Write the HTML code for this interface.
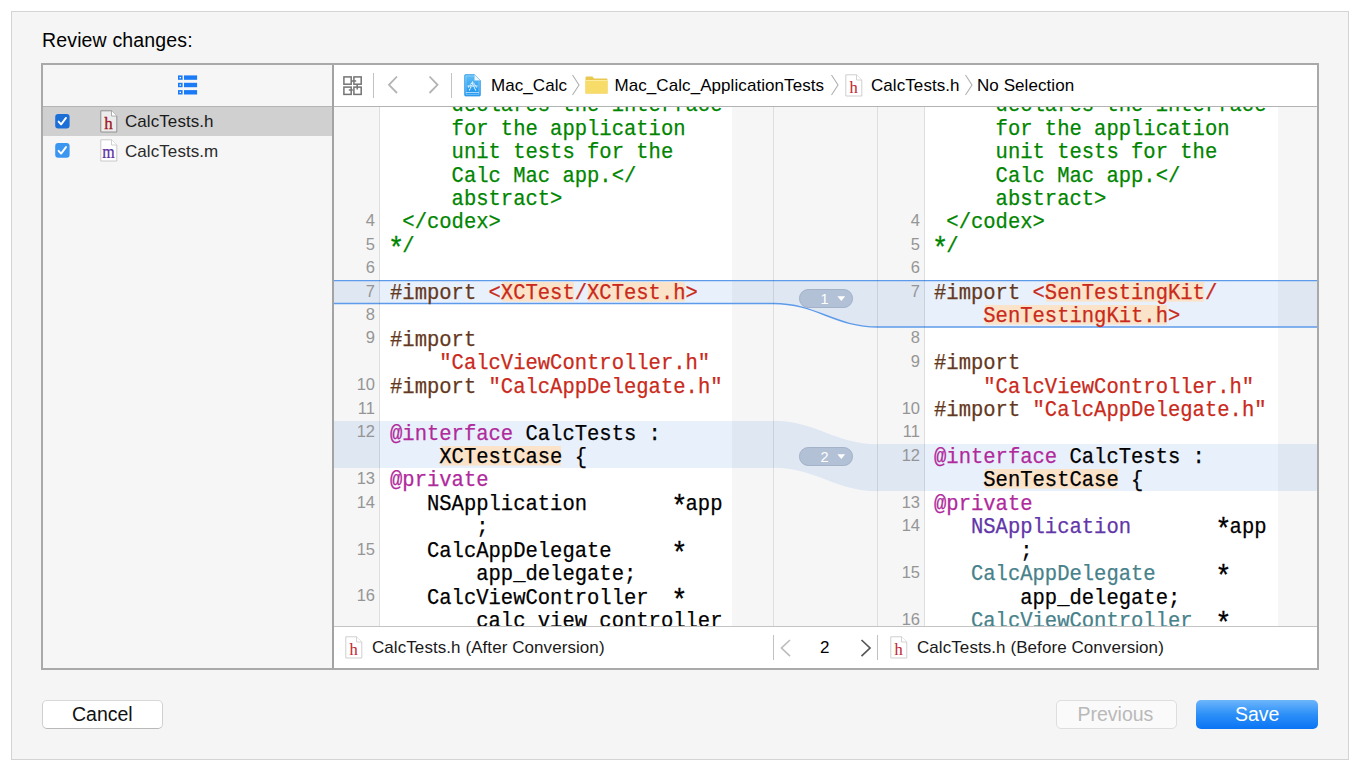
<!DOCTYPE html>
<html><head><meta charset="utf-8">
<style>
*{margin:0;padding:0;box-sizing:border-box}
html,body{width:1360px;height:771px;overflow:hidden;background:#fff;font-family:"Liberation Sans",sans-serif;color:#000}
.a{position:absolute}
.t{position:absolute;white-space:pre;line-height:1}
#frame{left:11px;top:11px;width:1338px;height:749px;border:1px solid #d4d4d4;background:#f5f5f5}
#box{left:41px;top:63px;width:1278px;height:607px;border:2px solid #a9a9a9;background:#f6f6f6}
.code{position:absolute;font-family:"Liberation Mono",monospace;font-size:22.4px;line-height:23.46px;white-space:pre;color:#000;-webkit-text-stroke:0.25px currentColor;transform:scaleX(0.91651);transform-origin:0 0}
.ln{position:absolute;font-family:"Liberation Sans",sans-serif;font-size:16.5px;line-height:23.46px;color:#959595;text-align:right;white-space:pre}
.ast{display:inline-block;transform:translate(0,4.6px) scale(1.32)}
.cm{color:#008500}.pp{color:#643820}.st{color:#c92a1b}.kw{color:#b02a9c}.sc{color:#6236a8}.pc{color:#47818a}
.hl{background:linear-gradient(90deg,transparent 1.2px,#fae3c9 1.2px,#fae3c9 calc(100% - 1.2px),transparent calc(100% - 1.2px)) 0 1.8px/100% 19.6px no-repeat}
.ui{font-size:17px;letter-spacing:0.07px}
</style></head><body>
<div id="frame" class="a"></div>
<div class="t" style="left:42px;top:30.5px;font-size:19.5px;letter-spacing:0.15px">Review changes:</div>

<div id="box" class="a"></div>

<!-- sidebar -->
<div class="a" style="left:43px;top:106px;width:289px;height:1px;background:#b4b4b4"></div>
<div class="a" style="left:43px;top:107px;width:289px;height:29px;background:#d0d0d0"></div>
<div class="a" style="left:332px;top:65px;width:2px;height:603px;background:#a3a3a3"></div>
<svg class="a" style="left:178px;top:75.4px" width="20" height="20" viewBox="0 0 20 20">
  <g fill="#1b7af6">
    <rect x="0" y="0.4" width="4.6" height="4.4"/><rect x="6" y="0.4" width="13.1" height="4.4"/>
    <rect x="0" y="7.8" width="4.6" height="4.4"/><rect x="6" y="7.8" width="13.1" height="4.4"/>
    <rect x="0" y="15.1" width="4.6" height="4.4"/><rect x="6" y="15.1" width="13.1" height="4.4"/>
  </g>
  <g fill="#fff"><rect x="1.6" y="2" width="1.4" height="1.3"/><rect x="1.6" y="9.4" width="1.4" height="1.3"/><rect x="1.6" y="16.7" width="1.4" height="1.3"/></g>
</svg>
<!-- checkboxes -->
<svg class="a" style="left:54.5px;top:114px" width="15" height="15" viewBox="0 0 15 15">
  <rect x="0.2" y="0" width="14.4" height="14.4" rx="3" fill="#1c6fd6"/>
  <path d="M3.6,7.6 L6.1,10.4 L11,3.9" stroke="#fff" stroke-width="1.9" fill="none" stroke-linecap="round" stroke-linejoin="round"/>
</svg>
<svg class="a" style="left:54.5px;top:143px" width="15" height="15" viewBox="0 0 15 15">
  <rect x="0.2" y="0" width="14.4" height="14.8" rx="3" fill="#3b96f2"/>
  <path d="M3.6,7.8 L6.1,10.6 L11,4.1" stroke="#fff" stroke-width="1.9" fill="none" stroke-linecap="round" stroke-linejoin="round"/>
</svg>
<!-- file icons sidebar -->
<svg class="a" style="left:100px;top:110px" width="18" height="23" viewBox="0 0 18 23">
  <path d="M0.8,0.8 L11.5,0.8 L16.8,6 L16.8,22 L0.8,22 Z" fill="#ececec" stroke="#8a8a8a" stroke-width="0.9"/>
  <path d="M11.5,0.8 L11.5,6 L16.8,6" fill="#fff" stroke="#9a9a9a" stroke-width="0.8"/>
  <text x="8.6" y="18.8" text-anchor="middle" font-family="Liberation Serif" font-size="17" fill="#a3141f" stroke="#a3141f" stroke-width="0.3">h</text>
</svg>
<div class="t ui" style="left:125px;top:113.2px;color:#1a1a1a">CalcTests.h</div>
<svg class="a" style="left:100px;top:139px" width="18" height="23" viewBox="0 0 18 23">
  <path d="M0.8,0.8 L11.5,0.8 L16.8,6 L16.8,22 L0.8,22 Z" fill="#fff" stroke="#c4c4c4" stroke-width="0.9"/>
  <path d="M11.5,0.8 L11.5,6 L16.8,6" fill="#fff" stroke="#c4c4c4" stroke-width="0.8"/>
  <text x="8.6" y="19.3" text-anchor="middle" font-family="Liberation Serif" font-size="16" fill="#5a30a0" stroke="#5a30a0" stroke-width="0.2" transform="translate(0,19.3) scale(1,1.12) translate(0,-19.3)">m</text>
</svg>
<div class="t ui" style="left:125px;top:142.5px;color:#2a2a2a">CalcTests.m</div>

<!-- toolbar -->
<div class="a" style="left:334px;top:65px;width:983px;height:41px;background:#fff"></div>
<div class="a" style="left:334px;top:106px;width:983px;height:1px;background:#b3b3b3"></div>
<svg class="a" style="left:343px;top:76px" width="20" height="20" viewBox="0 0 20 20">
  <g fill="none" stroke="#747474" stroke-width="1.5">
    <rect x="0.9" y="0.9" width="7.3" height="7.3"/><rect x="10.9" y="0.9" width="7.3" height="7.3"/>
    <rect x="0.9" y="11.1" width="7.3" height="7.3"/><rect x="10.9" y="11.1" width="7.3" height="7.3"/>
    <path d="M8.2,5.1 H13.2 M14.2,8.2 V13.5 M9.8,14.1 H5.8"/>
  </g>
</svg>
<div class="a" style="left:373px;top:73px;width:1px;height:25px;background:#c2c2c2"></div>
<svg class="a" style="left:386px;top:75px" width="55" height="20" viewBox="0 0 55 20">
  <path d="M11,1.5 L3,9.8 L11,18" stroke="#b3b3b3" stroke-width="1.8" fill="none"/>
  <path d="M43.5,1.5 L51.5,9.8 L43.5,18" stroke="#b3b3b3" stroke-width="1.8" fill="none"/>
</svg>
<div class="a" style="left:451px;top:73px;width:1px;height:25px;background:#c2c2c2"></div>
<svg class="a" style="left:464px;top:73.5px" width="18" height="23" viewBox="0 0 18 23">
  <defs><linearGradient id="pg" x1="0" y1="0" x2="0" y2="1"><stop offset="0" stop-color="#62c0f4"/><stop offset="1" stop-color="#1690f0"/></linearGradient></defs>
  <path d="M0.6,1.6 Q0.6,0.6 1.6,0.6 L10.4,0.6 L16.4,6.6 L16.4,21 Q16.4,22 15.4,22 L1.6,22 Q0.6,22 0.6,21 Z" fill="url(#pg)" stroke="#3d9de8" stroke-width="0.8"/>
  <path d="M2,20.6 L2,2 L10,2 M15,7.5 L15,20.6 L2,20.6" fill="none" stroke="#a8dcfa" stroke-width="0.7" opacity="0.8"/>
  <path d="M10.4,0.6 L10.4,6.6 L16.4,6.6 Z" fill="#f2f7fb" stroke="#8fc6ee" stroke-width="0.5"/>
  <path d="M4.2,13.5 L8.5,8 L12.8,13.5 M3.4,12 L13.6,12 M5.2,16.5 L8.5,10 L11.8,16.5" stroke="#eaf6ff" stroke-width="1.1" fill="none" stroke-dasharray="1.6 0.6"/>
  <path d="M2,18.6 H15" stroke="#c5e7fc" stroke-width="0.9"/>
</svg>
<div class="t ui" style="left:491px;top:76.6px">Mac_Calc</div>
<svg class="a" style="left:571px;top:74px" width="10" height="22" viewBox="0 0 10 22"><path d="M1.5,1 L8,11 L1.5,21" stroke="#b0b0b0" stroke-width="1.1" fill="none"/></svg>
<svg class="a" style="left:585px;top:76px" width="23" height="18" viewBox="0 0 23 18">
  <path d="M0.5,1.5 Q0.5,0.5 1.5,0.5 L7.5,0.5 L9,2.5 L21.5,2.5 Q22.5,2.5 22.5,3.5 L22.5,17.5 L0.5,17.5 Z" fill="#e9c84f"/>
  <rect x="0.5" y="4.5" width="22" height="13" fill="#f7dc6a"/>
  <path d="M0.5,4.5 H22.5" stroke="#fff3b0" stroke-width="0.8"/>
</svg>
<div class="t ui" style="left:614.5px;top:76.6px">Mac_Calc_ApplicationTests</div>
<svg class="a" style="left:830px;top:74px" width="10" height="22" viewBox="0 0 10 22"><path d="M1.5,1 L8,11 L1.5,21" stroke="#b0b0b0" stroke-width="1.1" fill="none"/></svg>
<svg class="a" style="left:845px;top:74px" width="18" height="23" viewBox="0 0 18 23">
  <path d="M0.8,0.8 L11.5,0.8 L16.8,6 L16.8,22 L0.8,22 Z" fill="#fff" stroke="#c9c9c9" stroke-width="0.9"/>
  <path d="M11.5,0.8 L11.5,6 L16.8,6" fill="#fff" stroke="#c9c9c9" stroke-width="0.8"/>
  <text x="8.6" y="18.6" text-anchor="middle" font-family="Liberation Serif" font-size="16.5" fill="#c22a35" stroke="#c22a35" stroke-width="0.1">h</text>
</svg>
<div class="t ui" style="left:871px;top:76.6px">CalcTests.h</div>
<svg class="a" style="left:964px;top:74px" width="10" height="22" viewBox="0 0 10 22"><path d="M1.5,1 L8,11 L1.5,21" stroke="#b0b0b0" stroke-width="1.1" fill="none"/></svg>
<div class="t ui" style="left:977px;top:76.6px">No Selection</div>

<div class="a" style="left:334px;top:107px;width:983px;height:519px;background:#f6f6f6"></div>
<div class="a" style="left:380px;top:107px;width:352px;height:519px;background:#fff"></div>
<div class="a" style="left:925px;top:107px;width:353px;height:519px;background:#fff"></div>
<div class="a" style="left:334px;top:280.06px;width:46px;height:23.46px;background:#dfe7f3"></div>
<div class="a" style="left:380px;top:280.06px;width:352px;height:23.46px;background:#e8f0fb"></div>
<div class="a" style="left:732px;top:280.06px;width:41px;height:23.46px;background:#dfe7f3"></div>
<div class="a" style="left:334px;top:420.82px;width:46px;height:46.92px;background:#dfe7f3"></div>
<div class="a" style="left:380px;top:420.82px;width:352px;height:46.92px;background:#e8f0fb"></div>
<div class="a" style="left:732px;top:420.82px;width:41px;height:46.92px;background:#dfe7f3"></div>
<div class="a" style="left:878px;top:280.06px;width:47px;height:46.92px;background:#dfe7f3"></div>
<div class="a" style="left:925px;top:280.06px;width:353px;height:46.92px;background:#e8f0fb"></div>
<div class="a" style="left:1278px;top:280.06px;width:39px;height:46.92px;background:#dfe7f3"></div>
<div class="a" style="left:878px;top:444.28px;width:47px;height:46.92px;background:#dfe7f3"></div>
<div class="a" style="left:925px;top:444.28px;width:353px;height:46.92px;background:#e8f0fb"></div>
<div class="a" style="left:1278px;top:444.28px;width:39px;height:46.92px;background:#dfe7f3"></div>
<svg class="a" style="left:0;top:0" width="1360" height="771" viewBox="0 0 1360 771"><clipPath id="cp"><rect x="334" y="107" width="983" height="519"/></clipPath><g clip-path="url(#cp)"><path d="M773,420.82 C817,420.82 834,444.28000000000003 878,444.28000000000003 L878,491.2 C834,491.2 817,467.74 773,467.74 Z" fill="#dfe7f3"/><path d="M773,280.06 C817,280.06 834,280.06 878,280.06 L878,326.98 C834,326.98 817,303.52 773,303.52 Z" fill="#dfe7f3"/><path d="M334,280.66 L1317,280.66" stroke="#5d9bea" stroke-width="1.4" fill="none"/><path d="M334,303.52 L773,303.52 C817,303.52 834,326.98 878,326.98 L1317,326.98" stroke="#5d9bea" stroke-width="1.4" fill="none"/></g></svg>
<div class="a" style="left:379px;top:107px;width:1px;height:519px;background:rgba(0,0,0,0.095)"></div>
<div class="a" style="left:773px;top:107px;width:1px;height:519px;background:rgba(0,0,0,0.095)"></div>
<div class="a" style="left:877px;top:107px;width:1px;height:519px;background:rgba(0,0,0,0.095)"></div>
<div class="a" style="left:924px;top:107px;width:1px;height:519px;background:rgba(0,0,0,0.095)"></div>
<div class="a" style="left:334px;top:107px;width:439px;height:519px;overflow:hidden"><div class="code" style="left:55.5px;top:-12.82px"><span class="cm">     declares the interface</span>
<span class="cm">     for the application</span>
<span class="cm">     unit tests for the</span>
<span class="cm">     Calc Mac app.&lt;/</span>
<span class="cm">     abstract&gt;</span>
<span class="cm"> &lt;/codex&gt;</span>
<span class="cm"><span class="ast">*</span>/</span>

<span class="pp">#import </span><span class="st">&lt;</span><span class="st hl">XCTest</span><span class="st">/</span><span class="st hl">XCTest.h</span><span class="st">&gt;</span>

<span class="pp">#import</span>
<span class="st">    "CalcViewController.h"</span>
<span class="pp">#import </span><span class="st">"CalcAppDelegate.h"</span>

<span class="kw">@interface</span> CalcTests :
    <span class="hl">XCTestCase</span> {
<span class="kw">@private</span>
   NSApplication       <span class="ast">*</span>app
       ;
   CalcAppDelegate     <span class="ast">*</span>
       app_delegate;
   CalcViewController  <span class="ast">*</span>
       calc_view_controller</div><div class="ln" style="left:0;width:41.0px;top:-15.12px">




4
5
6
7
8
9

10
11
12

13
14

15

16</div></div>
<div class="a" style="left:878px;top:107px;width:439px;height:519px;overflow:hidden"><div class="code" style="left:55.799999999999955px;top:-12.82px"><span class="cm">     declares the interface</span>
<span class="cm">     for the application</span>
<span class="cm">     unit tests for the</span>
<span class="cm">     Calc Mac app.&lt;/</span>
<span class="cm">     abstract&gt;</span>
<span class="cm"> &lt;/codex&gt;</span>
<span class="cm"><span class="ast">*</span>/</span>

<span class="pp">#import </span><span class="st">&lt;</span><span class="st hl">SenTestingKit</span><span class="st">/</span>
<span class="st">    </span><span class="st hl">SenTestingKit.h</span><span class="st">&gt;</span>

<span class="pp">#import</span>
<span class="st">    "CalcViewController.h"</span>
<span class="pp">#import </span><span class="st">"CalcAppDelegate.h"</span>

<span class="kw">@interface</span> CalcTests :
    <span class="hl">SenTestCase</span> {
<span class="kw">@private</span>
   <span class="sc">NSApplication</span>       <span class="ast">*</span>app
       ;
   <span class="pc">CalcAppDelegate</span>     <span class="ast">*</span>
       app_delegate;
   <span class="pc">CalcViewController</span>  <span class="ast">*</span></div><div class="ln" style="left:0;width:42.0px;top:-15.12px">




4
5
6
7

8
9

10
11
12

13
14

15

16</div></div>
<div class="a" style="left:798.5px;top:289.15px;width:54.5px;height:18.5px;border-radius:9.25px;background:#b3c1d6;border:1.5px solid #a3b2c9"></div><div class="t" style="left:819.5px;top:291.80px;font-size:14.5px;color:#fff;width:10px;text-align:center">1</div><svg class="a" style="left:837px;top:295.80px" width="9" height="6" viewBox="0 0 9 6"><path d="M0.4,0.3 L8.2,0.3 L4.3,4.9 Z" fill="#fff"/></svg>
<div class="a" style="left:798.5px;top:447.35px;width:54.5px;height:18.5px;border-radius:9.25px;background:#b3c1d6;border:1.5px solid #a3b2c9"></div><div class="t" style="left:819.5px;top:450.00px;font-size:14.5px;color:#fff;width:10px;text-align:center">2</div><svg class="a" style="left:837px;top:454.00px" width="9" height="6" viewBox="0 0 9 6"><path d="M0.4,0.3 L8.2,0.3 L4.3,4.9 Z" fill="#fff"/></svg>

<!-- bottom bar -->
<div class="a" style="left:334px;top:626px;width:983px;height:1px;background:#c4c4c4"></div>
<div class="a" style="left:334px;top:627px;width:983px;height:41px;background:#fff"></div>
<svg class="a" style="left:345px;top:636px" width="18" height="23" viewBox="0 0 18 23">
  <path d="M0.8,0.8 L11.5,0.8 L16.8,6 L16.8,22 L0.8,22 Z" fill="#fff" stroke="#c9c9c9" stroke-width="0.9"/>
  <path d="M11.5,0.8 L11.5,6 L16.8,6" fill="#fff" stroke="#c9c9c9" stroke-width="0.8"/>
  <text x="8.6" y="18.6" text-anchor="middle" font-family="Liberation Serif" font-size="16.5" fill="#c22a35" stroke="#c22a35" stroke-width="0.1">h</text>
</svg>
<div class="t ui" style="left:372px;top:639.2px;color:#1a1a1a">CalcTests.h (After Conversion)</div>
<div class="a" style="left:773px;top:635px;width:1px;height:25px;background:#c2c2c2"></div>
<svg class="a" style="left:778px;top:636px" width="96" height="24" viewBox="0 0 96 24">
  <path d="M12,4 L3.5,12 L12,20.2" stroke="#bdbdbd" stroke-width="1.7" fill="none"/>
  <path d="M83.5,4 L92,12 L83.5,20.2" stroke="#555" stroke-width="1.7" fill="none"/>
</svg>
<div class="t ui" style="left:820px;top:639.2px">2</div>
<div class="a" style="left:877px;top:635px;width:1px;height:25px;background:#c2c2c2"></div>
<svg class="a" style="left:890px;top:636px" width="18" height="23" viewBox="0 0 18 23">
  <path d="M0.8,0.8 L11.5,0.8 L16.8,6 L16.8,22 L0.8,22 Z" fill="#fff" stroke="#c9c9c9" stroke-width="0.9"/>
  <path d="M11.5,0.8 L11.5,6 L16.8,6" fill="#fff" stroke="#c9c9c9" stroke-width="0.8"/>
  <text x="8.6" y="18.6" text-anchor="middle" font-family="Liberation Serif" font-size="16.5" fill="#c22a35" stroke="#c22a35" stroke-width="0.1">h</text>
</svg>
<div class="t ui" style="left:917px;top:639.2px;color:#1a1a1a">CalcTests.h (Before Conversion)</div>

<!-- buttons -->
<div class="a" style="left:42px;top:700px;width:121px;height:29px;border-radius:5px;background:#fff;border:1px solid #cfcfcf;border-top-color:#d8d8d8;border-bottom-color:#b9b9b9"></div>
<div class="t" style="left:72px;top:704.5px;font-size:19.5px;color:#111">Cancel</div>
<div class="a" style="left:1056px;top:700px;width:121px;height:29px;border-radius:5px;background:#fafafa;border:1px solid #dedede"></div>
<div class="t" style="left:1077.5px;top:704.5px;font-size:19.5px;color:#b9b9b9">Previous</div>
<div class="a" style="left:1196px;top:700px;width:122px;height:29px;border-radius:5px;background:linear-gradient(#6db6fb,#2c8ff8 50%,#0a74f4)"></div>
<div class="t" style="left:1235px;top:704.5px;font-size:19.5px;color:#fff">Save</div>
</body></html>
